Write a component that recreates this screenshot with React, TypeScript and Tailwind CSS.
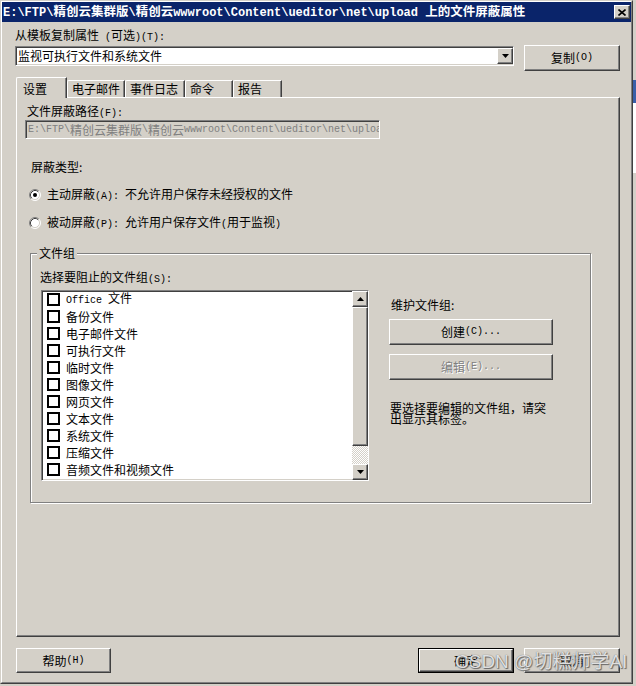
import React from 'react';

const MONO = "font-['Liberation_Mono',monospace] text-[10px]";
const MONO_TITLE = "font-['Liberation_Mono',monospace] text-[12px]";

// splits a label into ASCII runs (narrow mono, like the bitmap font) and CJK runs
function T({ s, latin = MONO }: { s: string; latin?: string }) {
  const parts = s.split(/([\x20-\x7e]+)/).filter(Boolean);
  return (
    <>
      {parts.map((p, i) =>
        /^[\x20-\x7e]+$/.test(p) ? (
          <span key={i} className={latin}>
            {p}
          </span>
        ) : (
          <span key={i}>{p}</span>
        )
      )}
    </>
  );
}

const raised =
  'border border-t-white border-l-white border-r-[#404040] border-b-[#404040] shadow-[inset_-1px_-1px_0_#808080] bg-[#d4d0c8]';
const sunken =
  'border border-t-[#808080] border-l-[#808080] border-r-white border-b-white shadow-[inset_1px_1px_0_#404040,inset_-1px_-1px_0_#d4d0c8]';

function Btn({ label, className = '', disabled = false }: { label: string; className?: string; disabled?: boolean }) {
  return (
    <div
      className={`${raised} flex items-center justify-center ${
        disabled ? 'text-[#808080] [text-shadow:1px_1px_0_#ffffff]' : ''
      } ${className}`}
    >
      <T s={label} />
    </div>
  );
}

function Radio({ on }: { on?: boolean }) {
  return (
    <svg width="12" height="12" viewBox="0 0 12 12" className="shrink-0">
      <circle cx="6" cy="6" r="5" fill="#ffffff" />
      <path d="M2.11 9.89 A5.5 5.5 0 0 1 9.89 2.11" stroke="#808080" fill="none" />
      <path d="M9.89 2.11 A5.5 5.5 0 0 1 2.11 9.89" stroke="#ffffff" fill="none" />
      <path d="M2.82 9.18 A4.5 4.5 0 0 1 9.18 2.82" stroke="#404040" fill="none" />
      <path d="M9.18 2.82 A4.5 4.5 0 0 1 2.82 9.18" stroke="#d4d0c8" fill="none" />
      {on && <circle cx="6" cy="6" r="2" fill="#000000" />}
    </svg>
  );
}

function Arrow({ down }: { down?: boolean }) {
  return (
    <svg width="7" height="4" viewBox="0 0 7 4">
      <polygon points={down ? '0,0 7,0 3.5,4' : '0,4 7,4 3.5,0'} fill="#000000" />
    </svg>
  );
}

const fileGroups = [
  'Office 文件',
  '备份文件',
  '电子邮件文件',
  '可执行文件',
  '临时文件',
  '图像文件',
  '网页文件',
  '文本文件',
  '系统文件',
  '压缩文件',
  '音频文件和视频文件',
];

const tabs = [
  { name: '设置', w: 'w-[51px]', active: true },
  { name: '电子邮件', w: 'w-[58px]' },
  { name: '事件日志', w: 'w-[60px]' },
  { name: '命令', w: 'w-[48px]' },
  { name: '报告', w: 'w-[49px]' },
];

export default function App() {
  return (
    <div className="relative w-[636px] h-[686px] flex bg-[#d4d0c8] overflow-hidden font-['Noto_Sans_CJK_SC',sans-serif] text-[12px] leading-[14px] text-black">
      {/* Dialog window */}
      <div className="w-[633px] h-[684px] shrink-0 border border-t-[#d4d0c8] border-l-[#d4d0c8] border-r-[#404040] border-b-[#404040]">
        <div className="h-full flex flex-col border border-t-white border-l-white border-r-[#808080] border-b-[#808080]">
          {/* Title bar */}
          <div className="h-[20px] bg-[#0a246a] flex items-center justify-between pl-[1px] pr-[1px]">
            <div className="text-white font-bold text-[12.5px] leading-[14px] whitespace-nowrap">
              <T
                s="E:\FTP\精创云集群版\精创云wwwroot\Content\ueditor\net\upload 上的文件屏蔽属性"
                latin={MONO_TITLE}
              />
            </div>
            <div className={`${raised} w-[16px] h-[14px] flex items-center justify-center`}>
              <svg width="8" height="7" viewBox="0 0 8 7">
                <path d="M0.5 0.5 L7.5 6.5 M7.5 0.5 L0.5 6.5" stroke="#000000" strokeWidth="1.6" />
              </svg>
            </div>
          </div>

          {/* Body */}
          <div className="flex-1 flex flex-col pt-[6px] pl-[13px] pr-[11px]">
            <div className="h-[14px]">
              <T s="从模板复制属性 (可选)(T):" />
            </div>

            <div className="flex items-start mt-[3px]">
              <div className={`${sunken} mt-[1px] w-[499px] h-[20px] bg-white flex items-center justify-between pl-[2px]`}>
                <span>监视可执行文件和系统文件</span>
                <div className={`${raised} w-[16px] h-[16px] flex items-center justify-center`}>
                  <Arrow down />
                </div>
              </div>
              <Btn label="复制(O)" className="ml-[10px] flex-1 h-[26px]" />
            </div>

            {/* Tabs */}
            <div className="flex items-end h-[20px] mt-[6px] ml-[1px]">
              {tabs.map((t) =>
                t.active ? (
                  <div
                    key={t.name}
                    className={`${t.w} relative z-10 h-[21px] -mb-[1px] bg-[#d4d0c8] border-t border-l border-white border-r border-r-[#404040] shadow-[inset_-1px_0_0_#808080] rounded-tl-[2px] pl-[6px] pt-[4px]`}
                  >
                    {t.name}
                  </div>
                ) : (
                  <div
                    key={t.name}
                    className={`${t.w} h-[17px] border-t border-l border-white border-r border-r-[#404040] shadow-[inset_-1px_0_0_#808080] rounded-tl-[2px] pl-[4px] pt-[1px]`}
                  >
                    {t.name}
                  </div>
                )
              )}
            </div>

            {/* Tab panel */}
            <div className="ml-[1px] h-[540px] border border-t-white border-l-white border-r-[#404040] border-b-[#404040] shadow-[inset_-1px_-1px_0_#808080] pt-[6px] pl-[8px] flex flex-col">
              <div className="ml-[2px] h-[14px]">
                <T s="文件屏蔽路径(F):" />
              </div>
              <div className={`${sunken} mt-[2px] w-[355px] h-[19px] pl-[2px] flex items-center overflow-hidden whitespace-nowrap text-[#808080]`}>
                <T s="E:\FTP\精创云集群版\精创云wwwroot\Content\ueditor\net\upload" />
              </div>

              <div className="mt-[21px] ml-[6px] h-[14px]">屏蔽类型:</div>

              <div className="mt-[14px] ml-[4px] h-[14px] flex items-center gap-[6px]">
                <Radio on />
                <span>
                  <T s="主动屏蔽(A): 不允许用户保存未经授权的文件" />
                </span>
              </div>
              <div className="mt-[14px] ml-[4px] h-[14px] flex items-center gap-[6px]">
                <Radio />
                <span>
                  <T s="被动屏蔽(P): 允许用户保存文件(用于监视)" />
                </span>
              </div>

              {/* File groups */}
              <fieldset className="mt-[16px] ml-[5px] w-[561px] h-[257px] border border-[#808080] shadow-[inset_1px_1px_0_#ffffff,1px_1px_0_#ffffff]">
                <legend className="ml-[6px] px-[2px] h-[14px] bg-[#d4d0c8]">文件组</legend>
                <div className="flex pl-[9px]">
                  <div className="flex flex-col">
                    <div className="mt-[10px] h-[14px]">
                      <T s="选择要阻止的文件组(S):" />
                    </div>
                    <div className={`${sunken} mt-[6px] ml-[1px] w-[328px] h-[191px] bg-white flex`}>
                      <div className="flex-1 flex flex-col pl-[5px]">
                        {fileGroups.map((g) => (
                          <div key={g} className="h-[17px] flex items-center gap-[6px]">
                            <div className="w-[13px] h-[13px] border-2 border-black bg-white shrink-0" />
                            <span>
                              <T s={g} />
                            </span>
                          </div>
                        ))}
                      </div>
                      <div className="w-[16px] flex flex-col">
                        <div className={`${raised} h-[16px] flex items-center justify-center`}>
                          <Arrow />
                        </div>
                        <div className={`${raised} h-[139px]`} />
                        <div className="flex-1 bg-[repeating-conic-gradient(#d4d0c8_0_25%,#ffffff_0_50%)] bg-[length:2px_2px]" />
                        <div className={`${raised} h-[16px] flex items-center justify-center`}>
                          <Arrow down />
                        </div>
                      </div>
                    </div>
                  </div>

                  <div className="ml-[20px] w-[164px] flex flex-col">
                    <div className="mt-[38px] ml-[2px] h-[14px]">维护文件组:</div>
                    <Btn label="创建(C)..." className="mt-[7px] h-[26px]" />
                    <Btn label="编辑(E)..." className="mt-[9px] h-[26px]" disabled />
                    <div className="mt-[22px] ml-[1px] leading-[11px]">
                      要选择要编辑的文件组，请突
                      <br />
                      出显示其标签。
                    </div>
                  </div>
                </div>
              </fieldset>
            </div>

            {/* Dialog buttons */}
            <div className="flex mt-[11px] h-[25px]">
              <Btn label="帮助(H)" className="ml-[1px] w-[95px] h-[25px]" />
              <div className="flex-1" />
              <div className="w-[96px] h-[25px] border border-black">
                <Btn label="确定" className="h-full" />
              </div>
              <Btn label="取消" className="ml-[10px] w-[96px] h-[25px]" />
            </div>
          </div>
        </div>
      </div>

      {/* Sliver of the window behind */}
      <div className="flex-1 flex flex-col">
        <div className="h-[80px] bg-[#d4d0c8]" />
        <div className="h-[23px] bg-[#3a5fa8]" />
        <div className="h-[70px] bg-white" />
        <div className="flex-1 bg-[#d4d0c8]" />
      </div>

      {/* Watermark */}
      <div className="absolute left-[455px] top-[650px] text-[19px] leading-[24px] text-white/80 [text-shadow:0_0_1px_#555555,1px_1px_1px_#666666] whitespace-nowrap font-['Liberation_Sans','Noto_Sans_CJK_SC',sans-serif]">
        CSDN @切糕师学AI
      </div>
    </div>
  );
}
